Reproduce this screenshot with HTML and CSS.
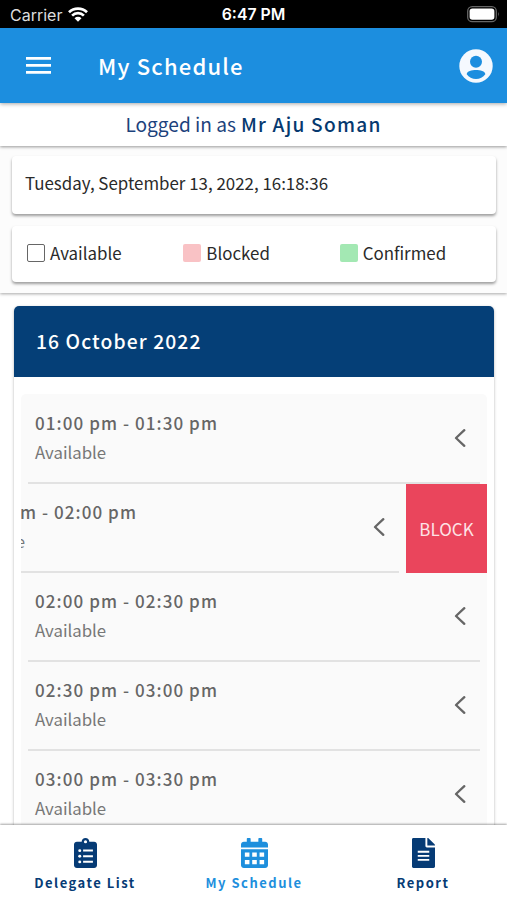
FILE: index.html
```html
<!DOCTYPE html>
<html lang="en">
<head>
<meta charset="utf-8">
<title>My Schedule</title>
<link rel="stylesheet" href="styles.css">
</head>
<body>
<div class="status">
  <div class="carrier"><span>Carrier</span>
    <svg width="20" height="15" viewBox="0 0 20 15" fill="none" stroke="#fff" stroke-width="2.7"><path d="M1 5.3a12.8 12.8 0 0 1 18 0M4.1 8.6a8.4 8.4 0 0 1 11.8 0"/><path d="M10 14.8 6.5 11.3a5 5 0 0 1 7 0z" fill="#fff" stroke="none"/></svg>
  </div>
  <div class="clock">6:47 PM</div>
  <svg class="battery" width="33" height="17" viewBox="0 0 33 17"><rect x=".7" y=".7" width="28.6" height="15" rx="4.5" fill="none" stroke="#666" stroke-width="1.3"/><rect x="2.6" y="2.6" width="24.8" height="11.2" rx="2.8" fill="#fff"/><path d="M31 5.7q1.8 2.5 0 5z" fill="#666"/></svg>
</div>
<header class="bar">
  <svg class="menu" width="25" height="17" viewBox="0 0 25 17" fill="#fff"><path d="M0 0h25v2.7H0zM0 7h25v2.7H0zM0 14h25v2.7H0z"/></svg>
  <h1>My Schedule</h1>
  <svg class="user" width="34" height="34" viewBox="0 0 34 34"><circle cx="17" cy="17" r="16.7" fill="#f5f9fe"/><circle cx="17" cy="12.7" r="6" fill="#1c8edf"/><path d="M7.7 25.2c0-3 5.2-4.2 9.3-4.2s9.300 1.200 9.300 4.200c-2.100 3.100-5.500 4.700-9.300 4.700s-7.200-1.600-9.300-4.700z" fill="#1c8edf"/></svg>
</header>
<div class="login"><span>Logged in as</span> <b>Mr Aju Soman</b></div>
<section class="info">
  <div class="panel date"><span>Tuesday, September 13, 2022, 16:18:36</span></div>
  <div class="panel legend">
    <div class="key"><i class="box"></i><span>Available</span></div>
    <div class="key"><i class="box blocked"></i><span>Blocked</span></div>
    <div class="key"><i class="box confirmed"></i><span>Confirmed</span></div>
  </div>
</section>
<main class="content">
  <section class="card">
    <h2>16 October 2022</h2>
    <div class="list">
      <div class="row"><div class="item"><div><p class="time">01:00 pm - 01:30 pm</p><p class="state">Available</p></div><svg class="chev" viewBox="0 0 12 18"><path d="M10.300 1.200 2 9l8.300 7.800"/></svg></div></div>
      <div class="row swiped"><div class="item"><div><p class="time">01:30 pm - 02:00 pm</p><p class="state">Available</p></div><svg class="chev" viewBox="0 0 12 18"><path d="M10.300 1.200 2 9l8.300 7.800"/></svg></div><div class="block">BLOCK</div></div>
      <div class="row"><div class="item"><div><p class="time">02:00 pm - 02:30 pm</p><p class="state">Available</p></div><svg class="chev" viewBox="0 0 12 18"><path d="M10.300 1.200 2 9l8.300 7.800"/></svg></div></div>
      <div class="row"><div class="item"><div><p class="time">02:30 pm - 03:00 pm</p><p class="state">Available</p></div><svg class="chev" viewBox="0 0 12 18"><path d="M10.300 1.200 2 9l8.300 7.800"/></svg></div></div>
      <div class="row"><div class="item"><div><p class="time">03:00 pm - 03:30 pm</p><p class="state">Available</p></div><svg class="chev" viewBox="0 0 12 18"><path d="M10.300 1.200 2 9l8.300 7.800"/></svg></div></div>
    </div>
  </section>
</main>
<nav class="tabs">
  <div class="tab">
    <svg width="23" height="30" viewBox="0 0 384 512" preserveAspectRatio="none"><path fill="currentColor" d="M336 64h-80c0-35.300-28.700-64-64-64s-64 28.700-64 64H48C21.500 64 0 85.500 0 112v352c0 26.500 21.500 48 48 48h288c26.500 0 48-21.500 48-48V112c0-26.500-21.500-48-48-48z"/><g fill="#fff"><circle cx="192" cy="64" r="26"/><circle cx="96" cy="216" r="25"/><circle cx="96" cy="312" r="25"/><circle cx="96" cy="408" r="25"/><path d="M152 198h164v34H152zM152 294h164v34H152zM152 390h164v34H152z"/></g></svg>
    <span>Delegate List</span>
  </div>
  <div class="tab active">
    <svg width="27" height="30" viewBox="0 0 448 512" preserveAspectRatio="none"><path fill="currentColor" d="M0 464c0 26.500 21.500 48 48 48h352c26.500 0 48-21.500 48-48V192H0zM448 160v-48c0-26.500-21.500-48-48-48h-48V12c0-6.600-5.400-12-12-12h-40c-6.600 0-12 5.400-12 12v52H160V12c0-6.600-5.400-12-12-12h-40c-6.600 0-12 5.400-12 12v52H48C21.500 64 0 85.500 0 112v48z"/><path fill="#fff" d="M64 248h76v72H64zM186 248h76v72h-76zM308 248h76v72h-76zM64 376h76v72H64zM186 376h76v72h-76zM308 376h76v72h-76z"/></svg>
    <span>My Schedule</span>
  </div>
  <div class="tab">
    <svg width="23" height="30" viewBox="0 0 384 512" preserveAspectRatio="none"><path fill="currentColor" d="M224 136V0H24C10.700 0 0 10.700 0 24v464c0 13.300 10.700 24 24 24h336c13.300 0 24-10.700 24-24V160H248c-13.200 0-24-10.800-24-24zM384 122v6H256V0h6c6 0 12 3 17 7l98 98c4 5 7 11 7 17z"/><path fill="#fff" d="M96 218h192v32H96zM96 288h192v32H96zM96 358h192v32H96z"/></svg>
    <span>Report</span>
  </div>
</nav>
</body>
</html>
```
FILE: styles.css
```css
* { box-sizing: border-box; margin: 0; padding: 0; }
body {
  height: 900px;
  overflow: hidden;
  display: flex;
  flex-direction: column;
  background: #fff;
  color: #2a2a2a;
  font-family: "Noto Sans CJK JP", "Noto Sans", sans-serif;
  font-size: 16.9px;
}
svg { display: block; flex: none; }
.status {
  height: 28px;
  flex: none;
  background: #000;
  color: #fff;
  display: grid;
  grid-template-columns: 1fr auto 1fr;
  align-items: center;
  padding: 1px 7px 0 10px;
  font: 16px/20px Inter, sans-serif;
}
.carrier { display: flex; align-items: center; gap: 6px; color: #ddd; }
.clock { font-weight: 600; font-size: 15.800px; margin-right: 3px; }
.battery { justify-self: end; }
.bar {
  height: 75px;
  flex: none;
  background: #1c8edf;
  color: #fff;
  display: flex;
  align-items: center;
  padding: 0 14px 0 26px;
  position: relative;
  z-index: 2;
  box-shadow: 0 1px 4px rgba(0,0,0,.35);
}
h1 { font-size: 22px; font-weight: 500; line-height: 30px; letter-spacing: 1.200px; margin-left: 47px; padding-bottom: 2px; flex: 1; }
.login {
  height: 43px;
  flex: none;
  display: flex;
  justify-content: center;
  align-items: center;
  gap: 5px;
  padding-bottom: 2px;
  font-size: 19.100px;
  line-height: 28px;
  color: #1c427c;
  background: #fff;
  position: relative;
  z-index: 1;
  box-shadow: 0 1px 3px rgba(0,0,0,.4);
}
.login b { font-weight: 500; letter-spacing: 1.250px; color: #06396f; }
.info {
  height: 147px;
  flex: none;
  padding: 10px 11px 0 12px;
  background: #fcfcfc;
  display: flex;
  flex-direction: column;
  gap: 12px;
  box-shadow: 0 1px 3px rgba(0,0,0,.35);
}
.panel { background: #fff; border-radius: 4px; box-shadow: 0 2px 3px rgba(0,0,0,.38); display: flex; align-items: center; line-height: 24px; }
.date { height: 58px; padding: 0 0 4px 13px; }
.legend { height: 56px; padding: 0 0 2px 15px; }
.key { display: flex; align-items: center; gap: 5px; width: 157.300px; }
.box { width: 18px; height: 18px; border-radius: 2px; border: 1.500px solid #666; }
.blocked { background: #f9c2c5; border: 0; }
.confirmed { background: #a3e8b3; border: 0; }
.content { flex: 1; min-height: 0; overflow: hidden; padding: 13px 13.500px 0 14px; }
.card { border-radius: 5px 5px 0 0; box-shadow: 0 1px 3px rgba(0,0,0,.3); }
h2 {
  height: 71px;
  background: #053f77;
  color: #fff;
  border-radius: 5px 5px 0 0;
  display: flex;
  align-items: center;
  padding: 0 0 2px 22px;
  font-size: 19.300px;
  font-weight: 500;
  line-height: 28px;
  letter-spacing: 1.100px;
}
.list { margin: 17px 7px 0; background: #fafafa; border-radius: 5px 5px 0 0; padding-top: .5px; }
.row { height: 89px; display: flex; overflow: hidden; }
.item {
  width: 452px;
  flex: none;
  margin: 0 7px;
  border-bottom: 2px solid #e2e2e2;
  display: flex;
  justify-content: space-between;
  align-items: center;
  padding: 0 14px 0 7px;
  color: #666;
}
.swiped .item { margin-left: -74px; }
.time { font-size: 17px; font-weight: 500; line-height: 28px; letter-spacing: 1.080px; white-space: nowrap; }
.state { font-size: 16.800px; line-height: 30px; color: #777; }
.chev { width: 12px; height: 18px; fill: none; stroke: #666; stroke-width: 2.300; stroke-linecap: round; stroke-linejoin: round; }
.block { width: 81px; flex: none; background: #ea455c; color: #fde3e6; display: flex; align-items: center; justify-content: center; font-size: 17px; }
.tabs {
  height: 75px;
  flex: none;
  background: #fff;
  display: grid;
  grid-template-columns: repeat(3, 1fr);
  color: #063b75;
  position: relative;
  box-shadow: 0 -1px 2px rgba(0,0,0,.35);
}
.tab { display: flex; flex-direction: column; align-items: center; padding: 13px 0 0 1px; gap: 5px; }
.tab span { font-size: 13px; font-weight: 700; line-height: 20px; letter-spacing: 1.500px; }
.active { color: #1e8fdd; }
```
